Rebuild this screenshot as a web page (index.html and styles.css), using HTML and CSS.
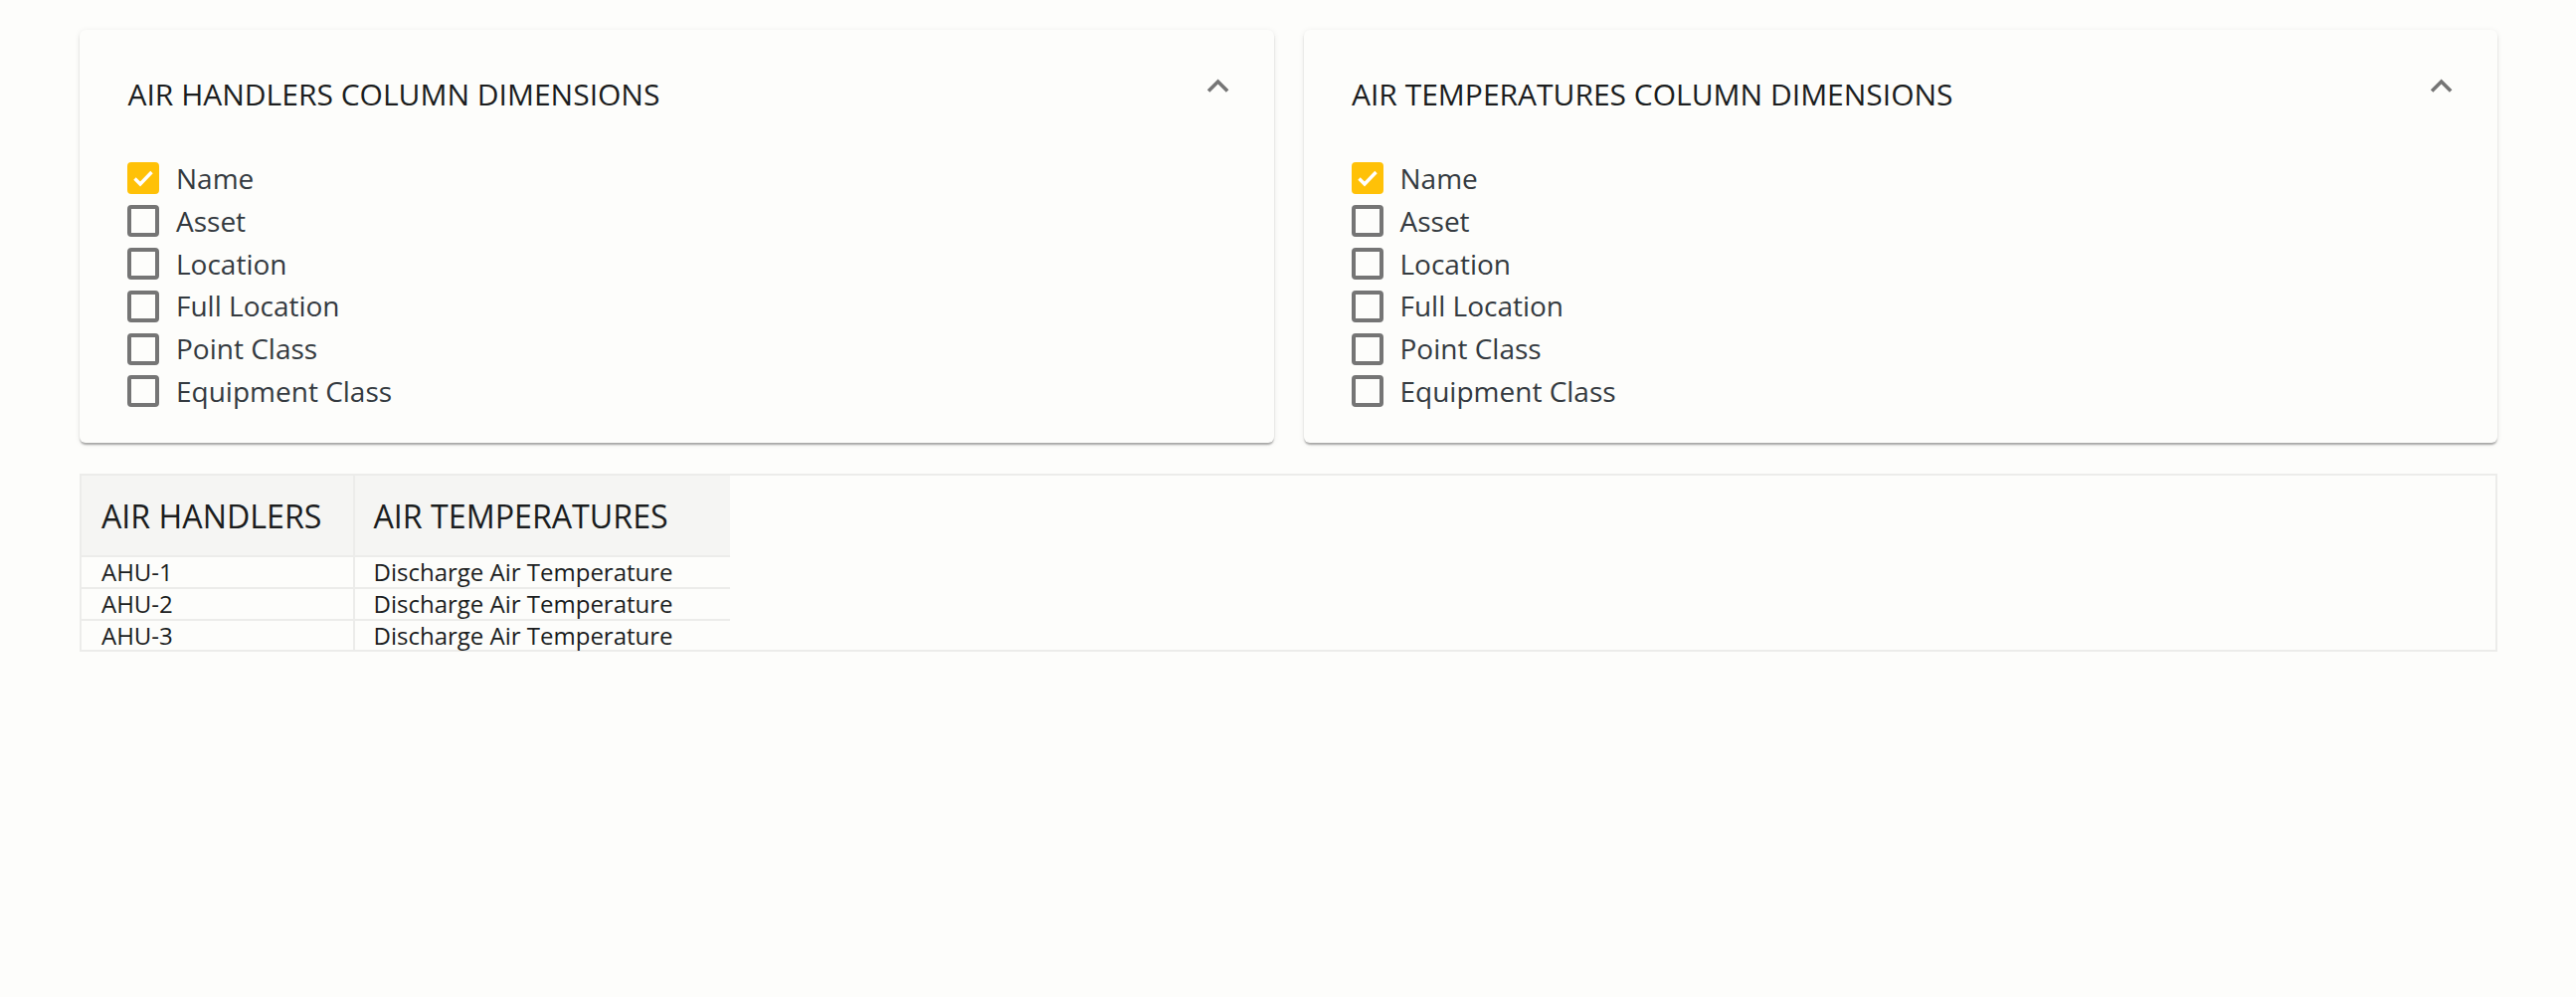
FILE: index.html
```html
<!DOCTYPE html>
<html lang="en">
<head>
<meta charset="utf-8">
<title>Column Dimensions</title>
<link rel="stylesheet" href="styles.css">
</head>
<body>
<div class="page">
  <div class="panels">
    <section class="card">
      <div class="card-head">
        <h2 class="card-title">AIR HANDLERS COLUMN DIMENSIONS</h2>
        <svg class="chevron" viewBox="0 0 24 24"><path d="M12 8l-6 6 1.41 1.41L12 10.83l4.59 4.58L18 14z"/></svg>
      </div>
      <ul class="options">
        <li class="option"><span class="box checked"><svg viewBox="0 0 32 32"><polyline points="7.5,16.5 13,22 24.5,10"/></svg></span><span class="label">Name</span></li>
        <li class="option"><span class="box"></span><span class="label">Asset</span></li>
        <li class="option"><span class="box"></span><span class="label">Location</span></li>
        <li class="option"><span class="box"></span><span class="label">Full Location</span></li>
        <li class="option"><span class="box"></span><span class="label">Point Class</span></li>
        <li class="option"><span class="box"></span><span class="label">Equipment Class</span></li>
      </ul>
    </section>
    <section class="card">
      <div class="card-head">
        <h2 class="card-title">AIR TEMPERATURES COLUMN DIMENSIONS</h2>
        <svg class="chevron" viewBox="0 0 24 24"><path d="M12 8l-6 6 1.41 1.41L12 10.83l4.59 4.58L18 14z"/></svg>
      </div>
      <ul class="options">
        <li class="option"><span class="box checked"><svg viewBox="0 0 32 32"><polyline points="7.5,16.5 13,22 24.5,10"/></svg></span><span class="label">Name</span></li>
        <li class="option"><span class="box"></span><span class="label">Asset</span></li>
        <li class="option"><span class="box"></span><span class="label">Location</span></li>
        <li class="option"><span class="box"></span><span class="label">Full Location</span></li>
        <li class="option"><span class="box"></span><span class="label">Point Class</span></li>
        <li class="option"><span class="box"></span><span class="label">Equipment Class</span></li>
      </ul>
    </section>
  </div>
  <div class="table-wrap">
    <table class="grid">
      <thead>
        <tr><th class="c1">AIR HANDLERS</th><th class="c2">AIR TEMPERATURES</th></tr>
      </thead>
      <tbody>
        <tr><td class="c1">AHU-1</td><td class="c2">Discharge Air Temperature</td></tr>
        <tr><td class="c1">AHU-2</td><td class="c2">Discharge Air Temperature</td></tr>
        <tr><td class="c1">AHU-3</td><td class="c2">Discharge Air Temperature</td></tr>
      </tbody>
    </table>
  </div>
</div>
</body>
</html>
```

FILE: styles.css
```css
html, body {
  margin: 0;
  padding: 0;
  background: #fdfdfb;
}
body {
  font-family: "Open Sans", "Noto Sans", sans-serif;
  color: #212121;
}
.page {
  padding: 30px 79px 0 80px;
}
.panels {
  display: flex;
  gap: 30px;
}
.card {
  flex: 1 1 0;
  background: #fdfdfb;
  border-radius: 6px;
  box-shadow: 0 3px 2px -1px rgba(0,0,0,0.22), 0 2px 2px rgba(0,0,0,0.12), 0 1px 6px rgba(0,0,0,0.08);
  padding: 34.6px 34.6px 29.6px 48px;
  height: 415px;
  box-sizing: border-box;
}
.card-head {
  display: flex;
  justify-content: space-between;
  align-items: flex-start;
}
.card-title {
  margin: 12.8px 0 0 0.5px;
  font-size: 30px;
  line-height: 36px;
  font-weight: 400;
  color: #1b1d1e;
}
.chevron {
  width: 43.2px;
  height: 43.2px;
  fill: #757575;
  flex: none;
}
.options {
  list-style: none;
  margin: 44.6px 0 0 0;
  padding: 0;
}
.option {
  display: flex;
  align-items: center;
  height: 42.8px;
}
.box {
  width: 32px;
  height: 32px;
  box-sizing: border-box;
  border: 4px solid #757575;
  border-radius: 4px;
  flex: none;
  margin-right: 17px;
  position: relative;
}
.box.checked {
  background: #ffc107;
  border-color: #ffc107;
}
.box svg {
  position: absolute;
  left: -4px;
  top: -4px;
  width: 32px;
  height: 32px;
  fill: none;
  stroke: #ffffff;
  stroke-width: 3.4;
}
.label {
  font-size: 28px;
  line-height: 42.8px;
  color: #343a40;
}
.table-wrap {
  margin-top: 31px;
  border: 2px solid #ececea;
  height: 179px;
  box-sizing: border-box;
}
.grid {
  border-collapse: collapse;
  table-layout: fixed;
}
.grid th {
  height: 80px;
  background: #f5f5f3;
  font-weight: 400;
  font-size: 32.2px;
  text-align: left;
  padding: 0 0 0 20px;
  border-bottom: 2px solid #ececea;
  color: #1b1d1e;
  vertical-align: middle;
}
.grid td {
  height: 30px;
  font-size: 24px;
  padding: 0 0 0 20px;
  line-height: 30px;
  border-bottom: 2px solid #ececea;
  color: #1b1d1e;
  vertical-align: middle;
}
.grid tbody tr:last-child td {
  border-bottom: none;
}
.grid .c1 {
  width: 253px;
  border-right: 2px solid #ececea;
}
.grid th.c2, .grid td.c2 {
  width: 358px;
  padding-left: 18.5px;
}
```
